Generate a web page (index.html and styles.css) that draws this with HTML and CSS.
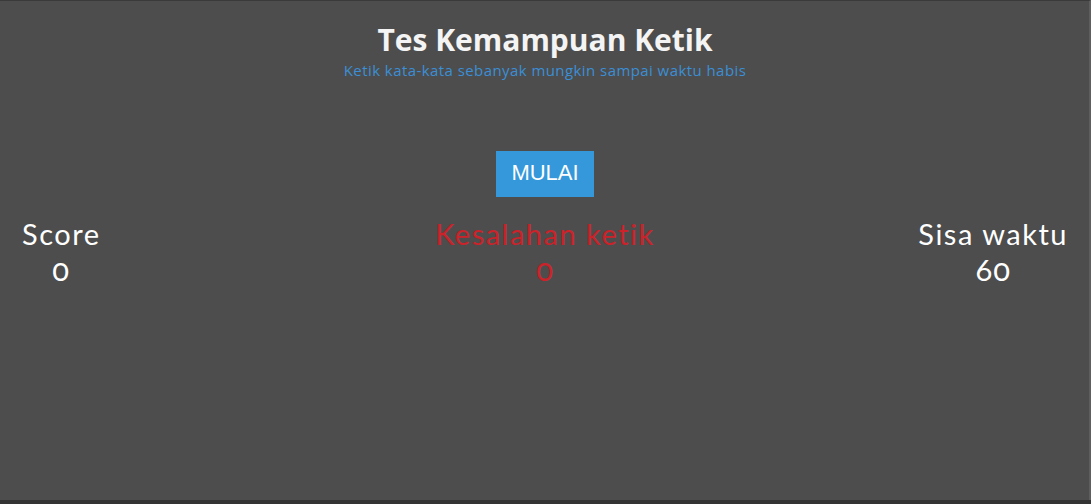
FILE: index.html
```html
<!DOCTYPE html>
<html lang="id">
<head>
<meta charset="utf-8">
<title>Tes Kemampuan Ketik</title>
<link rel="stylesheet" href="styles.css">
</head>
<body>
<div class="page">
  <header class="header">
    <h1 class="title">Tes Kemampuan Ketik</h1>
    <p class="subtitle">Ketik kata-kata sebanyak mungkin sampai waktu habis</p>
  </header>
  <div class="actions">
    <button class="start-btn">MULAI</button>
  </div>
  <div class="stats">
    <div class="stat stat-left">
      <div class="stat-label">Score</div>
      <div class="stat-value">0</div>
    </div>
    <div class="stat stat-mid">
      <div class="stat-label">Kesalahan ketik</div>
      <div class="stat-value">0</div>
    </div>
    <div class="stat stat-right">
      <div class="stat-label">Sisa waktu</div>
      <div class="stat-value">60</div>
    </div>
  </div>
</div>
</body>
</html>
```

FILE: styles.css
```css
html, body {
  margin: 0;
  padding: 0;
  background: #333333;
}
.page {
  box-sizing: border-box;
  height: 500px;
  background: #4d4d4d;
  border-top: 1px solid #3a3a3a;
  border-right: 2px solid #5e5e5e;
  font-family: "Open Sans", "Lato", sans-serif;
  color: #ffffff;
  padding: 0 21px 0 22px;
}
.header {
  text-align: center;
  padding-top: 18px;
}
.title {
  margin: 0;
  font-size: 30px;
  font-weight: 700;
  line-height: 41px;
  color: #f4f4f4;
}
.subtitle {
  margin: 0;
  font-size: 15px;
  line-height: 20px;
  letter-spacing: 0.43px;
  color: #3b8fd6;
}
.actions {
  display: flex;
  justify-content: center;
  margin-top: 71px;
}
.start-btn {
  width: 98px;
  height: 46px;
  border: none;
  background: #3498db;
  color: #ffffff;
  font-family: "Liberation Sans", Arial, sans-serif;
  font-size: 22px;
  padding: 0 0 2px 0;
}
.stats {
  display: grid;
  grid-template-columns: 1fr auto 1fr;
  margin-top: 19px;
  font-family: "Lato", "Open Sans", sans-serif;
}
.stat {
  text-align: center;
}
.stat-label {
  font-size: 29px;
  line-height: 35px;
  letter-spacing: 1.5px;
}
.stat-value {
  font-size: 31px;
  line-height: 37px;
  letter-spacing: 1px;
  font-variant-numeric: oldstyle-nums;
}
.stat-left { justify-self: start; }
.stat-right { justify-self: end; }
.stat-mid { color: #cc2229; }
```
